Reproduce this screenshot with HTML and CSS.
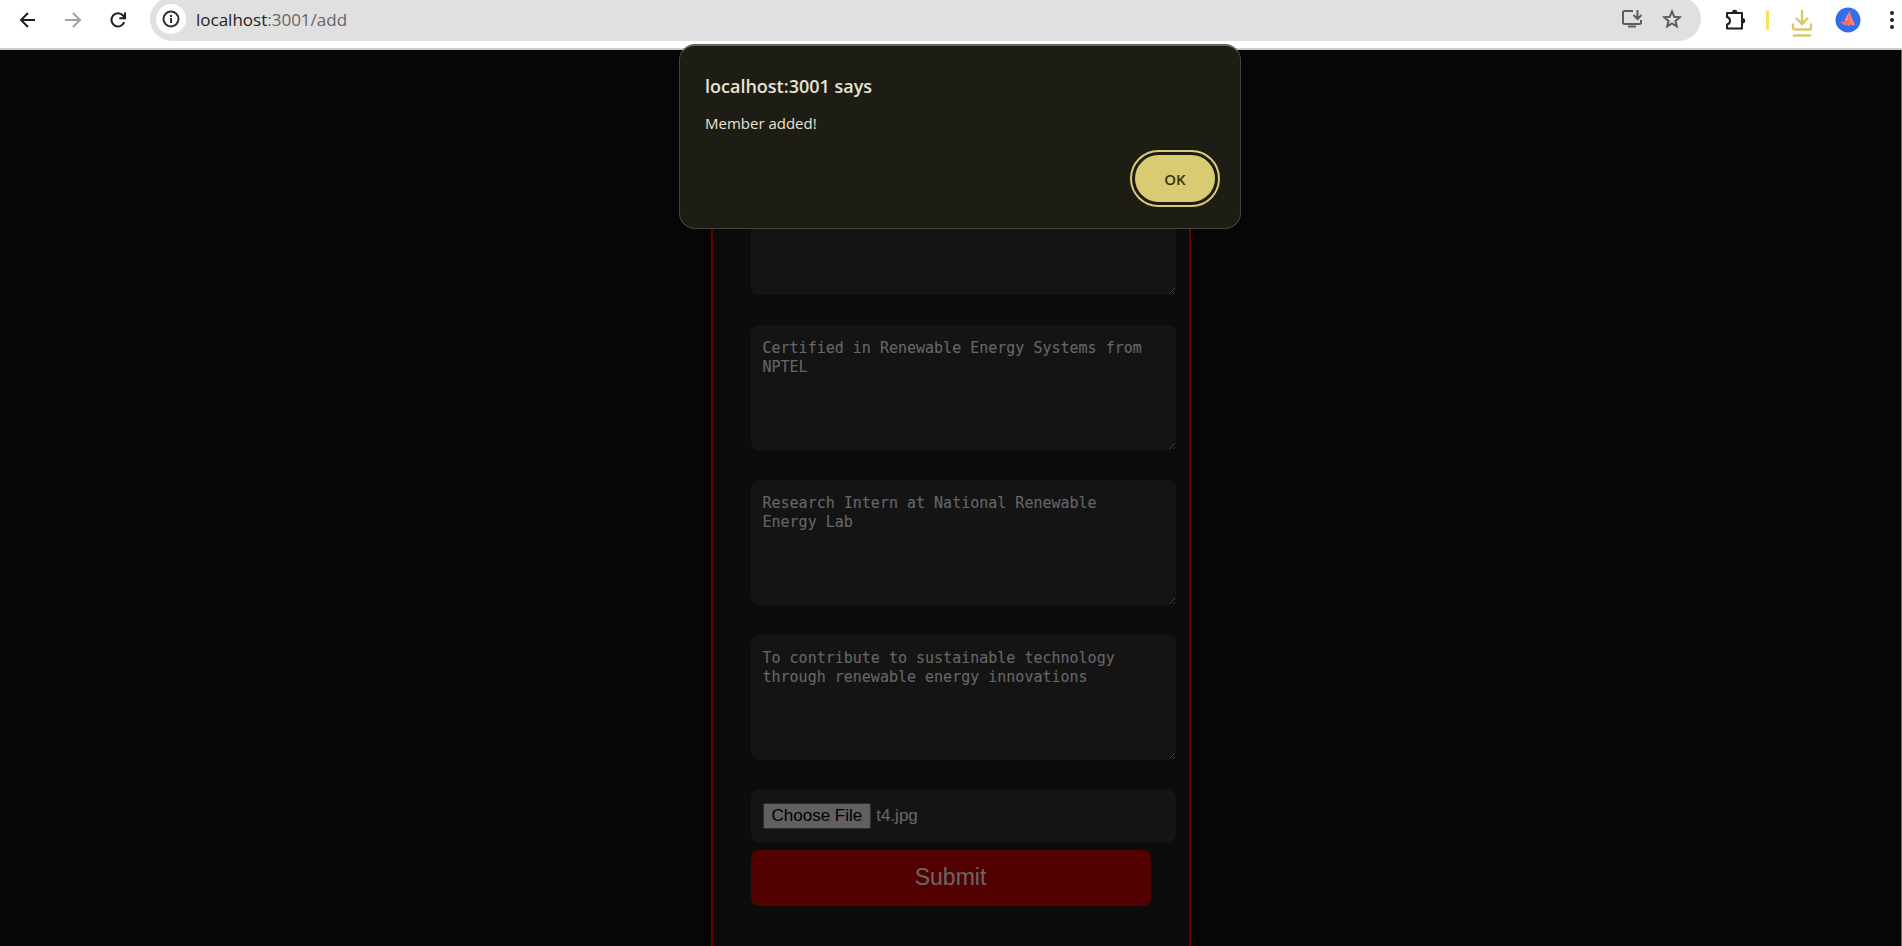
FILE: index.html
```html
<!DOCTYPE html>
<html lang="en">
<head>
<meta charset="utf-8">
<title>Add member</title>
<link rel="stylesheet" href="styles.css">
</head>
<body>
<header class="toolbar">
  <nav class="nav">
    <button class="icon-btn" aria-label="Back"><svg width="24" height="24" viewBox="0 0 24 24" fill="none" stroke="#1f1f1f" stroke-width="2"><path d="M19 12H6M12 5l-7 7 7 7"/></svg></button>
    <button class="icon-btn" aria-label="Forward"><svg width="24" height="24" viewBox="0 0 24 24" fill="none" stroke="#a3a3a3" stroke-width="2"><path d="M4 12H18M12 5l7 7-7 7"/></svg></button>
    <button class="icon-btn" aria-label="Reload"><svg width="24" height="24" viewBox="0 0 24 24" fill="none" stroke="#1f1f1f" stroke-width="2"><path d="M18.200 14.200A6.600 6.600 0 1 1 17 7.500L18.600 9.200M19 4.500V10.200H13.300"/></svg></button>
  </nav>
  <div class="omnibox">
    <button class="site-info" aria-label="Site information"><svg width="18" height="18" viewBox="0 0 18 18" fill="none" stroke="#303030" stroke-width="2"><circle cx="9" cy="9" r="7.500"/><path d="M9 8v5M9 5v2"/></svg></button>
    <div class="address"><span class="host">localhost</span>:3001/add</div>
    <button class="omni-btn" aria-label="Install app"><svg width="22" height="20" viewBox="0 0 22 20" fill="none" stroke="#5e5e5e" stroke-width="2"><path d="M12 2H3.500Q2 2 2 3.500V13.500Q2 15 3.500 15H18.500Q20 15 20 13.500V11M7 17.500H15M16.500 1V9M12.500 6l4 4 4-4"/></svg></button>
    <button class="omni-btn" aria-label="Bookmark"><svg width="22" height="22" viewBox="0 0 22 22" fill="none" stroke="#5e5e5e" stroke-width="2"><path d="M11 3.500l2.200 5.200 5.600.5-4.300 3.700 1.300 5.500-4.800-2.900-4.800 2.900 1.300-5.500L3.200 9.200l5.600-.5z"/></svg></button>
  </div>
  <div class="tools">
    <button class="icon-btn" aria-label="Extensions"><svg width="24" height="24" viewBox="0 0 24 24"><path d="M4 5H19V20.500H4V16.500Q7 16 7 12.800T4 9Z" fill="none" stroke="#1f1f1f" stroke-width="2" stroke-linejoin="round"/><path d="M9 4.500a2.700 2.700 0 0 1 5.400 0zM19.500 10a2.700 2.700 0 0 1 0 5.400z" fill="#1f1f1f"/></svg></button>
    <span class="divider"></span>
    <button class="icon-btn downloads" aria-label="Downloads"><svg width="22" height="28" viewBox="0 0 22 28" fill="none" stroke="#d7c96b" stroke-width="2.400" stroke-linecap="round"><path d="M11 2V14.500M5.500 9.500l5.500 5.500L16.500 9.500M2 15.500V18.500Q2 20.500 4 20.500H18Q20 20.500 20 18.500V15.500M3 26.500H19"/></svg></button>
    <button class="icon-btn" aria-label="Profile"><svg width="26" height="26" viewBox="0 0 26 26"><circle cx="13" cy="13" r="12.500" fill="#3070ee"/><path d="M14.500 4L9 13.500 5 15 11 18.500 14.500 15z" fill="#b8486a"/><path d="M14.500 4L9.500 13l3 2z" fill="#ff8a80"/><path d="M14.500 4l2 6 3.500 7.500-2.500 1.500-1.500-2-3 2.500 0-3.500z" fill="#ff7d73"/><path d="M5 15l6.500-1 2 3-2.500 2z" fill="#f0706c"/></svg></button>
    <button class="icon-btn" aria-label="Menu"><svg width="6" height="20" viewBox="0 0 6 20" fill="#1f1f1f"><circle cx="3" cy="3" r="2"/><circle cx="3" cy="10" r="2"/><circle cx="3" cy="17" r="2"/></svg></button>
  </div>
</header>
<main class="page">
  <form class="card">
    <textarea class="field" aria-label="Hobbies"></textarea>
    <textarea class="field" aria-label="Certificate">Certified in Renewable Energy Systems from NPTEL</textarea>
    <textarea class="field" aria-label="Internship">Research Intern at National Renewable Energy Lab</textarea>
    <textarea class="field" aria-label="Aim">To contribute to sustainable technology through renewable energy innovations</textarea>
    <input class="field file" id="photo" type="file" aria-label="Photo">
    <button class="submit" type="button">Submit</button>
  </form>
  <div class="backdrop"></div>
</main>
<div class="alert" role="alertdialog" aria-labelledby="alert-title">
  <h1 class="alert-title" id="alert-title">localhost:3001 says</h1>
  <p class="alert-text">Member added!</p>
  <button class="ok">OK</button>
</div>
<script src="script.js"></script>
</body>
</html>
```

FILE: styles.css
```css
* { box-sizing: border-box; }
body {
  margin: 0;
  height: 100vh;
  display: flex;
  flex-direction: column;
  overflow: hidden;
  background: #111;
  font-family: "Open Sans", "Noto Sans", sans-serif;
}
button { font: inherit; border: 0; padding: 0; background: none; cursor: pointer; }
svg { display: block; }

.toolbar {
  flex: none;
  display: flex;
  height: 50px;
  padding: 0 7px 9px 16px;
  align-items: center;
  background: #fff;
  border-bottom: 2px solid #ccc;
}
.nav { display: flex; gap: 21px; margin-right: 20px; }
.omnibox {
  flex: 1;
  display: flex;
  align-items: center;
  height: 44px;
  margin-top: -2px;
  padding: 0 18px 0 6px;
  background: #e0e0e0;
  border-radius: 22px;
}
.site-info {
  display: grid;
  place-items: center;
  width: 30px;
  height: 30px;
  border-radius: 50%;
  background: #fff;
}
.address { flex: 1; margin-left: 10px; padding-top: 2px; font-size: 17px; line-height: 22px; color: #666; }
.host { color: #1f1f1f; }
.omni-btn { margin-left: 18px; }
.tools { display: flex; align-items: center; margin-left: 22px; }
.divider { width: 3px; height: 20px; margin: 0 22px 0 19px; border-radius: 2px; background: #ffdf5a; }
.downloads { margin: 6px 22px 0 0; }
.tools .icon-btn:last-child { margin-left: 28px; }

.page {
  position: relative;
  flex: 1;
  min-height: 0;
  overflow: hidden;
  border-right: 1px solid #666;
}
.card {
  display: flex;
  flex-direction: column;
  gap: 30px;
  width: 480px;
  min-height: 100%;
  margin: 0 auto;
  padding: 120px 38px 40px;
  background: #1e1e1e;
  border: solid #f00;
  border-width: 0 2px;
  box-shadow: 0 0 12px #000;
}
.field {
  flex: none;
  width: calc(100% + 25px);
  height: 125px;
  margin: 0;
  padding: 14px 24px 12px 12px;
  border: 0;
  border-radius: 8px;
  background: #333;
  color: #fff;
  color-scheme: dark;
  font: 15px/19px "DejaVu Sans Mono", monospace;
  resize: vertical;
}
.file {
  height: 52px;
  padding: 13px 12px;
  font: 17px/20px "Liberation Sans", Arial, sans-serif;
}
.file::file-selector-button {
  height: 26px;
  margin-right: 5px;
  padding: 0 8px;
  border: 1px solid #767676;
  border-radius: 2px;
  background: #efefef;
  color: #000;
  font: inherit;
}
.submit {
  height: 56px;
  margin-top: -22px;
  padding-bottom: 2px;
  border-radius: 8px;
  background: #c00;
  color: #fff;
  font: 23px "Liberation Sans", Arial, sans-serif;
}
.backdrop { position: absolute; inset: 0; background: rgba(0, 0, 0, 0.6); }

.alert {
  position: absolute;
  top: 44px;
  left: 50%;
  margin-left: -272px;
  width: 562px;
  display: flex;
  flex-direction: column;
  padding: 27px 22px 23px 25px;
  border: 1px solid #45453a;
  border-top: 2px solid #66665c;
  border-radius: 16px;
  background: #1e1d15;
  color: #e7e3d4;
}
.alert-title { margin: 0; font-size: 18px; line-height: 26px; font-weight: 600; }
.alert-text { margin: 13px 0 0; font-size: 15px; line-height: 22px; }
.ok {
  align-self: flex-end;
  width: 80px;
  height: 47px;
  margin: 21px 3px 3px;
  border-radius: 24px;
  background: #d9cb72;
  color: #393300;
  font-size: 15px;
  font-weight: 600;
  outline: 2px solid #d9cb72;
  outline-offset: 3px;
}
```

FILE: script.js
```js
const files = new DataTransfer();
files.items.add(new File([""], "t4.jpg"));
document.getElementById("photo").files = files.files;
```
